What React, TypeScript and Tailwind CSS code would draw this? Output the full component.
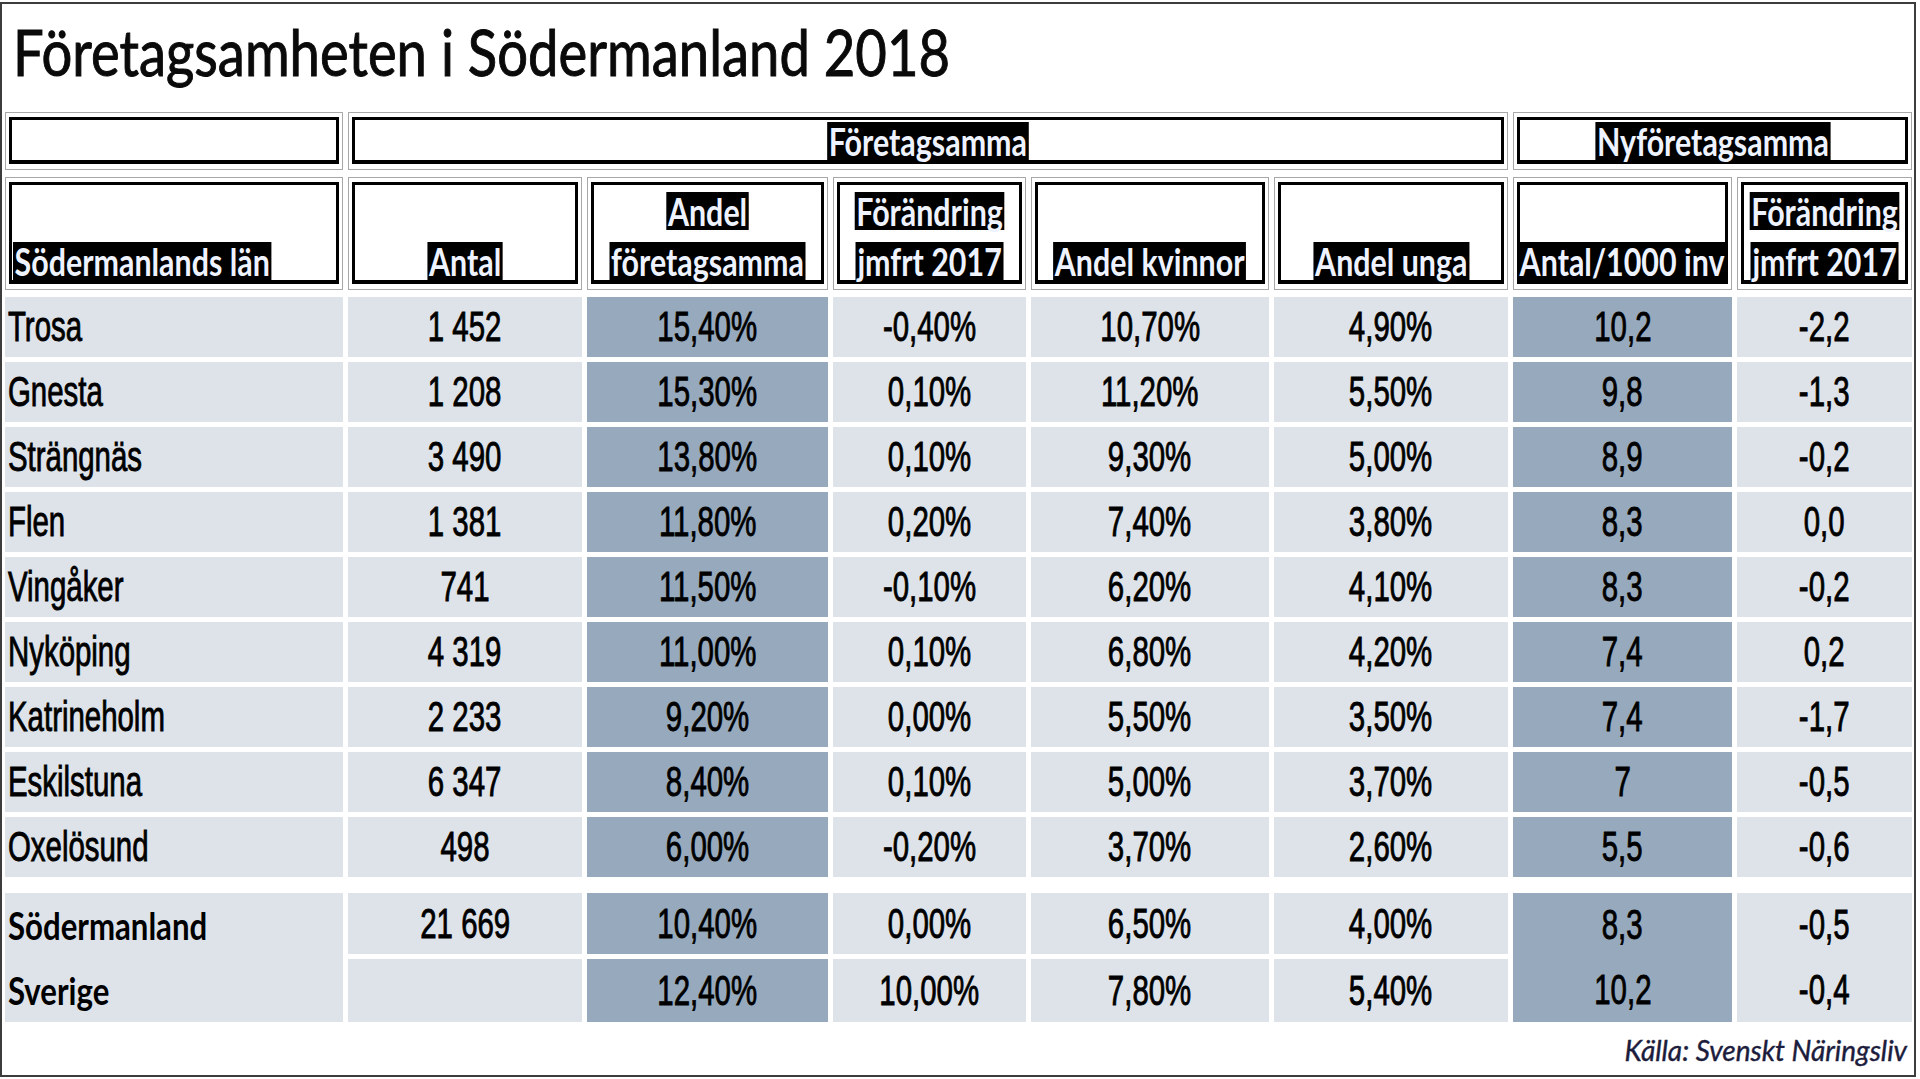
const grid = 'grid grid-cols-[338px_234px_241px_193px_238px_234px_219px_175px] gap-x-[5px]'

const rows = [
  ['Trosa', '1 452', '15,40%', '-0,40%', '10,70%', '4,90%', '10,2', '-2,2'],
  ['Gnesta', '1 208', '15,30%', '0,10%', '11,20%', '5,50%', '9,8', '-1,3'],
  ['Strängnäs', '3 490', '13,80%', '0,10%', '9,30%', '5,00%', '8,9', '-0,2'],
  ['Flen', '1 381', '11,80%', '0,20%', '7,40%', '3,80%', '8,3', '0,0'],
  ['Vingåker', '741', '11,50%', '-0,10%', '6,20%', '4,10%', '8,3', '-0,2'],
  ['Nyköping', '4 319', '11,00%', '0,10%', '6,80%', '4,20%', '7,4', '0,2'],
  ['Katrineholm', '2 233', '9,20%', '0,00%', '5,50%', '3,50%', '7,4', '-1,7'],
  ['Eskilstuna', '6 347', '8,40%', '0,10%', '5,00%', '3,70%', '7', '-0,5'],
  ['Oxelösund', '498', '6,00%', '-0,20%', '3,70%', '2,60%', '5,5', '-0,6'],
]

const sod = ['Södermanland', '21 669', '10,40%', '0,00%', '6,50%', '4,00%', '8,3', '-0,5']
const sve = ['Sverige', '', '12,40%', '10,00%', '7,80%', '5,40%', '10,2', '-0,4']

const light = 'bg-[#dde3e9]'
const dark = 'bg-[#97aabd]'

function Num({ v, left }: { v: string; left?: boolean }) {
  return (
    <span
      className={`inline-block scale-x-[0.7] text-[42px] leading-none text-black font-['Liberation_Sans',Arial,sans-serif] [-webkit-text-stroke:0.9px_#000] whitespace-nowrap ${left ? 'origin-left' : 'origin-center'}`}
    >
      {v}
    </span>
  )
}

function Label({ lines, left }: { lines: string[]; left?: boolean }) {
  return (
    <div className={`flex flex-col gap-[12px] scale-x-[0.8] ${left ? 'items-start origin-left' : 'items-center origin-bottom'}`}>
      {lines.map((l) => (
        <span key={l} className="block bg-black text-[#eef3ff] font-['Lato',sans-serif] font-bold text-[38px] leading-[38px] px-[2px] whitespace-nowrap">
          {l}
        </span>
      ))}
    </div>
  )
}

function HBox({ lines, left, className = '' }: { lines?: string[]; left?: boolean; className?: string }) {
  return (
    <div className={`border border-[#a8a8a8] pt-[4px] px-[3px] pb-[5px] ${className}`}>
      <div className={`h-full border-x-[3px] border-t-[3px] border-b-[4px] border-black flex items-end ${left ? 'justify-start pl-[1px]' : 'justify-center'}`}>
        {lines && <Label lines={lines} left={left} />}
      </div>
    </div>
  )
}

function DataRow({ r }: { r: string[] }) {
  return (
    <div className={grid}>
      {r.map((v, i) => (
        <div
          key={i}
          className={`h-[60px] flex items-center ${i === 0 ? 'justify-start pl-[3px]' : 'justify-center'} ${i === 2 || i === 6 ? dark : light}`}
        >
          <Num v={v} left={i === 0} />
        </div>
      ))}
    </div>
  )
}

function SumName({ v }: { v: string }) {
  return (
    <span className="inline-block origin-left scale-x-[0.82] font-['Lato',sans-serif] font-bold text-[38px] leading-none text-black whitespace-nowrap">
      {v}
    </span>
  )
}

export default function App() {
  return (
    <div className="w-[1920px] h-[1079px] bg-white pt-[2px]">
      <div className="w-[1916px] h-[1075px] border-2 border-[#3c3c3c] pl-[3px] flex flex-col">
        <div className="h-[108px] pt-[16px] pl-[8px]">
          <h1 className="inline-block origin-left scale-x-[0.85] font-['Lato',sans-serif] text-[64px] leading-none text-[#0a0a0a] [-webkit-text-stroke:1px_#0a0a0a] whitespace-nowrap">
            Företagsamheten i Södermanland 2018
          </h1>
        </div>

        <div className={`${grid} h-[58px]`}>
          <HBox />
          <HBox className="col-span-5" lines={['Företagsamma']} />
          <HBox className="col-span-2" lines={['Nyföretagsamma']} />
        </div>

        <div className={`${grid} h-[113px] mt-[7px]`}>
          <HBox left lines={['Södermanlands län']} />
          <HBox lines={['Antal']} />
          <HBox lines={['Andel', 'företagsamma']} />
          <HBox lines={['Förändring', 'jmfrt 2017']} />
          <HBox lines={['Andel kvinnor']} />
          <HBox lines={['Andel unga']} />
          <HBox lines={['Antal/1000 inv']} />
          <HBox lines={['Förändring', 'jmfrt 2017']} />
        </div>

        <div className="mt-[7px] flex flex-col gap-[5px]">
          {rows.map((r) => (
            <DataRow key={r[0]} r={r} />
          ))}
        </div>

        <div className={`${grid} mt-[16px] grid-rows-[61px_63px] gap-y-[5px]`}>
          <div className={`row-span-2 ${light} flex flex-col`}>
            <div className="flex-1 flex items-center pl-[3px]"><SumName v={sod[0]} /></div>
            <div className="flex-1 flex items-center pl-[3px]"><SumName v={sve[0]} /></div>
          </div>
          {[1, 2, 3, 4, 5].map((i) => (
            <div key={'s' + i} className={`${i === 2 ? dark : light} flex items-center justify-center`}>
              <Num v={sod[i]} />
            </div>
          ))}
          <div className={`row-span-2 ${dark} flex flex-col`}>
            <div className="flex-1 flex items-center justify-center"><Num v={sod[6]} /></div>
            <div className="flex-1 flex items-center justify-center"><Num v={sve[6]} /></div>
          </div>
          <div className={`row-span-2 ${light} flex flex-col`}>
            <div className="flex-1 flex items-center justify-center"><Num v={sod[7]} /></div>
            <div className="flex-1 flex items-center justify-center"><Num v={sve[7]} /></div>
          </div>
          {[1, 2, 3, 4, 5].map((i) => (
            <div key={'v' + i} className={`${i === 2 ? dark : light} flex items-center justify-center`}>
              <Num v={sve[i]} />
            </div>
          ))}
        </div>

        <div className="mt-[14px] pr-[7px] flex justify-end">
          <span className="inline-block origin-right font-['Lato',sans-serif] italic text-[28px] leading-none text-[#1c1c3c] [-webkit-text-stroke:0.4px_#1c1c3c] whitespace-nowrap">
            Källa: Svenskt Näringsliv
          </span>
        </div>
      </div>
    </div>
  )
}
